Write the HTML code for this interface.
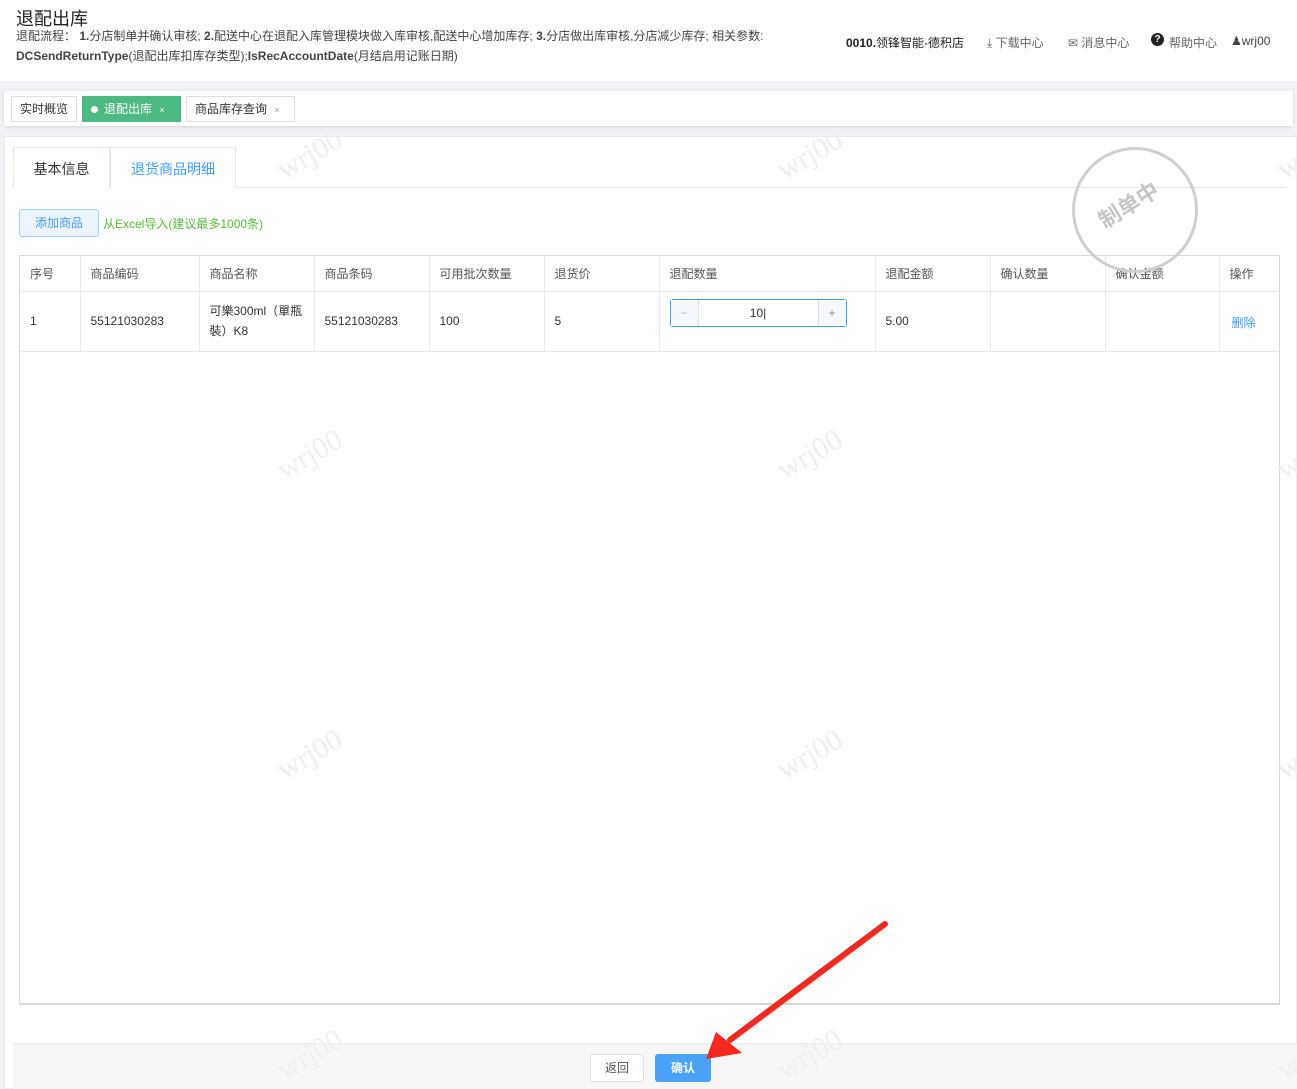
<!DOCTYPE html>
<html><head><meta charset="utf-8">
<style>
*{margin:0;padding:0;box-sizing:border-box}
body{width:1297px;height:1089px;overflow:hidden;background:#f0f2f5;font-family:"Liberation Sans","Noto Sans CJK SC",sans-serif;position:relative;color:#333}
.abs{position:absolute}
.hdr{left:0;top:0;width:1297px;height:81px;background:#fff}
.wm{position:absolute;font-family:"Liberation Serif",serif;font-size:30px;color:#efefef;transform:rotate(-30deg);white-space:nowrap}
table{border-collapse:collapse;font-size:12px;color:#555}
td{border-right:1px solid #e8eaee;border-bottom:1px solid #e8eaee;padding-left:10px}
</style></head><body>
<div class="abs hdr"></div>
<div class="abs" style="left:16px;top:5px;font-size:18px;color:#222">退配出库</div>
<div class="abs" style="left:16px;top:26px;font-size:12px;line-height:20px;color:#444;width:780px">退配流程： <b>1.</b>分店制单并确认审核; <b>2.</b>配送中心在退配入库管理模块做入库审核,配送中心增加库存; <b>3.</b>分店做出库审核,分店减少库存; 相关参数:<br><b>DCSendReturnType</b>(退配出库扣库存类型);<b>IsRecAccountDate</b>(月结启用记账日期)</div>
<div class="abs" style="left:846px;top:34px;font-size:12px;color:#222;font-weight:bold">0010.<span style="font-weight:normal">领锋智能-德积店</span></div>
<div class="abs" style="left:987px;top:34px;font-size:12px;color:#666">⤓ 下载中心</div>
<div class="abs" style="left:1068px;top:34px;font-size:12px;color:#666">✉ 消息中心</div>
<div class="abs" style="left:1151px;top:33px;width:13px;height:13px;border-radius:50%;background:#222;color:#fff;font-size:10px;text-align:center;line-height:13px;font-weight:bold">?</div>
<div class="abs" style="left:1169px;top:34px;font-size:12px;color:#666">帮助中心</div>
<div class="abs" style="left:1231px;top:34px;font-size:12px;color:#444">&#9823;wrj00</div>

<div class="abs" style="left:4px;top:91px;width:1289px;height:35px;background:#fff;box-shadow:0 1px 3px rgba(0,0,0,.12)"></div>
<div class="abs" style="left:11px;top:96px;width:66px;height:26px;border:1px solid #dcdfe6;font-size:12px;line-height:24px;text-align:center;background:#fff">实时概览</div>
<div class="abs" style="left:82px;top:96px;width:99px;height:26px;background:#4cba82;color:#fff;font-size:12px;line-height:26px;padding-left:9px"><span style="display:inline-block;width:7px;height:7px;border-radius:50%;background:#fff;margin-right:6px"></span>退配出库 <span style="font-size:9px;margin-left:4px">×</span></div>
<div class="abs" style="left:186px;top:96px;width:109px;height:26px;border:1px solid #dcdfe6;font-size:12px;line-height:24px;padding-left:8px;background:#fff">商品库存查询 <span style="font-size:9px;color:#999;margin-left:4px">×</span></div>

<div class="abs" style="left:4px;top:136px;width:1293px;height:953px;background:#fff;border:1px solid #e8ebf0"></div>
<div class="abs" style="left:13px;top:187px;width:1273px;height:1px;background:#e4e7ed"></div>
<div class="abs" style="left:13px;top:147px;width:97px;height:41px;border:1px solid #e4e7ed;border-bottom:none;background:#fff;font-size:14px;line-height:42px;text-align:center">基本信息</div>
<div class="abs" style="left:110px;top:147px;width:126px;height:41px;border:1px solid #e4e7ed;border-bottom:1px solid #fff;background:#fff;font-size:14px;line-height:42px;text-align:center;color:#409eff">退货商品明细</div>

<div class="abs" style="left:19px;top:209px;width:80px;height:28px;border:1px solid #a3d0fd;background:#ecf5ff;border-radius:3px;color:#409eff;font-size:12px;line-height:26px;text-align:center">添加商品</div>
<div class="abs" style="left:103px;top:215px;font-size:12px;color:#5aba3c">从Excel导入(建议最多1000条)</div>

<div class="abs" style="left:19px;top:255px;width:1261px;height:750px;border:1px solid #d8d8d8;border-bottom:2px solid #d8d8d8"></div>
<table class="abs" style="left:20px;top:256px">
<tr style="height:35px"><td style="width:60px">序号</td><td style="width:119px">商品编码</td><td style="width:115px">商品名称</td><td style="width:115px">商品条码</td><td style="width:115px">可用批次数量</td><td style="width:115px">退货价</td><td style="width:216px">退配数量</td><td style="width:115px">退配金额</td><td style="width:115px">确认数量</td><td style="width:114px">确认金额</td><td style="width:61px;border-right:none">操作</td></tr>
<tr style="height:60px;color:#333"><td>1</td><td>55121030283</td><td style="line-height:20px">可樂300ml（單瓶裝）K8</td><td>55121030283</td><td>100</td><td>5</td><td style="padding-left:10px"><div style="width:177px;height:28px;border:1px solid #409eff;border-radius:3px;display:flex;margin-top:-16px"><span style="width:28px;background:#f5f7fa;border-right:1px solid #dcdfe6;color:#bbb;text-align:center;line-height:26px">−</span><span style="flex:1;text-align:center;line-height:26px">10|</span><span style="width:28px;background:#f5f7fa;border-left:1px solid #dcdfe6;color:#888;text-align:center;line-height:26px">+</span></div></td><td>5.00</td><td></td><td></td><td style="border-right:none;color:#409eff;padding-top:2px;padding-left:12px">删除</td></tr>
</table>

<div class="abs" style="left:13px;top:1043px;width:1284px;height:46px;background:#f6f6f6;border-top:1px solid #ececec"></div>
<div class="abs" style="left:590px;top:1054px;width:54px;height:28px;border:1px solid #dcdfe6;border-radius:3px;background:#fff;font-size:12px;line-height:26px;text-align:center;color:#555">返回</div>
<div class="abs" style="left:655px;top:1054px;width:56px;height:28px;border-radius:3px;background:#4aa3f8;font-size:12px;line-height:28px;text-align:center;color:#fff;font-weight:bold">确认</div>

<div class="wm" style="left:275px;top:138px">wrj00</div><div class="wm" style="left:775px;top:138px">wrj00</div>
<div class="wm" style="left:275px;top:438px">wrj00</div><div class="wm" style="left:775px;top:438px">wrj00</div>
<div class="wm" style="left:275px;top:738px">wrj00</div><div class="wm" style="left:775px;top:738px">wrj00</div>
<div class="wm" style="left:275px;top:1038px">wrj00</div><div class="wm" style="left:775px;top:1038px">wrj00</div>
<div class="wm" style="left:1275px;top:138px">wrj00</div><div class="wm" style="left:1275px;top:438px">wrj00</div><div class="wm" style="left:1275px;top:738px">wrj00</div><div class="wm" style="left:1275px;top:1038px">wrj00</div>

<div class="abs" style="left:1072px;top:147px;width:126px;height:126px;border:3px solid #cfcfcf;border-radius:50%"></div>
<div class="abs" style="left:1095px;top:188px;font-size:22px;font-weight:bold;color:#c6c6c6;transform:rotate(-32deg)">制单中</div>

<svg class="abs" style="left:0;top:0" width="1297" height="1089"><line x1="885" y1="924" x2="730" y2="1040" stroke="#f5281e" stroke-width="6" stroke-linecap="round"/><polygon points="706,1059 716,1032 742,1053" fill="#f5281e"/></svg>
</body></html>
